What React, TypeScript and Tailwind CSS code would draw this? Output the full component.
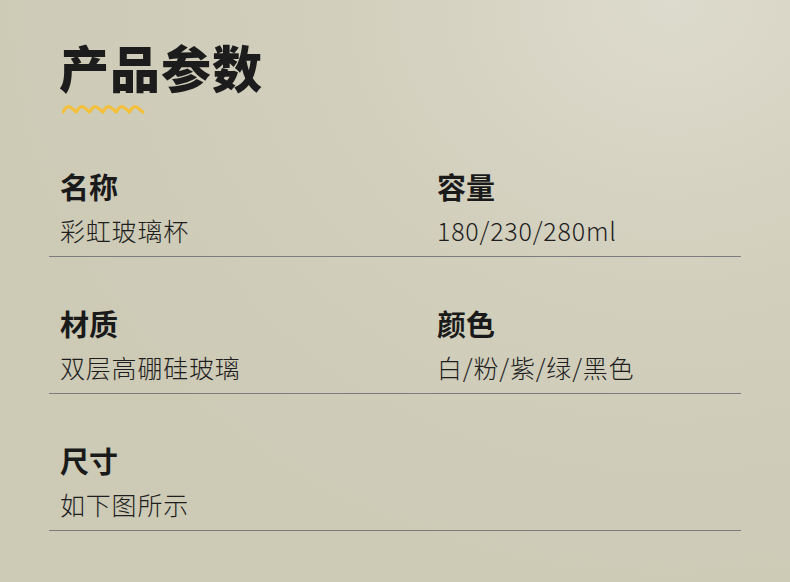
import React from 'react'

const rows = [
  [
    { label: '名称', value: '彩虹玻璃杯' },
    { label: '容量', value: '180/230/280ml' },
  ],
  [
    { label: '材质', value: '双层高硼硅玻璃' },
    { label: '颜色', value: '白/粉/紫/绿/黑色' },
  ],
  [{ label: '尺寸', value: '如下图所示' }],
]

function Wave() {
  // six little humps under the heading
  let d = 'M1 8'
  for (let i = 0; i < 6; i++) {
    const x = 1 + i * 13.3
    d += ` Q${x + 4} 1 ${x + 7} 3 Q${x + 10} 5 ${x + 13.3} 8`
  }
  return (
    <svg width="84" height="11" viewBox="0 0 84 11" className="block">
      <path d={d} fill="none" stroke="#f4c03c" strokeWidth="3.2" strokeLinejoin="round" strokeLinecap="round" />
    </svg>
  )
}

export default function App() {
  return (
    <div
      className="w-[790px] h-[582px] overflow-hidden bg-[radial-gradient(ellipse_at_85%_0%,#dddbcd_0%,#d2cfbd_35%,#cdcab6_70%)] text-[#1c1c1c]"
      style={{ fontFamily: '"Noto Sans CJK SC", "Noto Sans", sans-serif' }}
    >
      <div className="pl-[59px] pt-[36px]">
        <h1 className="text-[50px] leading-[60px] font-black tracking-[1px]">产品参数</h1>
        <div className="mt-[8px] ml-[3px]">
          <Wave />
        </div>
      </div>

      <div className="pl-[49px] w-[741px] mt-[53px]">
        {rows.map((row, i) => (
          <div
            key={i}
            className={`flex border-b border-[#7b7b80] pb-[10px] ${i === 0 ? 'pt-0' : 'pt-[48px]'}`}
          >
            {row.map((cell, j) => (
              <div
                key={cell.label}
                className={`pl-[11px] flex flex-col gap-[10px] ${j === 0 ? 'w-[377px] shrink-0' : 'flex-1'}`}
              >
                <div className="text-[29px] leading-[36px] font-bold text-[#1a1a1a]">{cell.label}</div>
                <div className="text-[25px] leading-[32px] font-extralight tracking-[0.8px] text-[#1e1e1e]">
                  {cell.value}
                </div>
              </div>
            ))}
          </div>
        ))}
      </div>
    </div>
  )
}
